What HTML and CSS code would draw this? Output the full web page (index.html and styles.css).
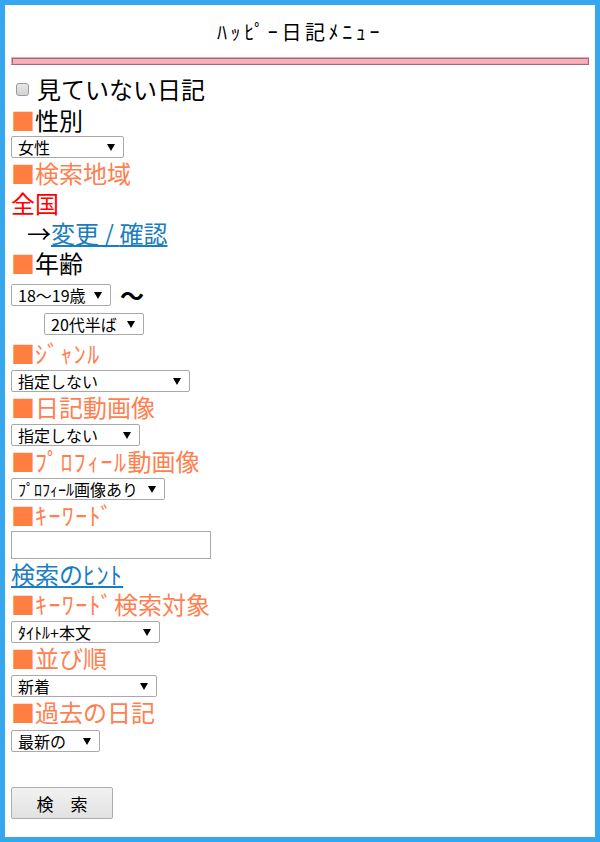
FILE: index.html
```html
<!DOCTYPE html>
<html lang="ja">
<head>
<meta charset="utf-8">
<title>ハッピー日記メニュー</title>
<link rel="stylesheet" href="styles.css">
</head>
<body>
<div class="page">
  <h1 class="title">ﾊｯﾋﾟｰ日記ﾒﾆｭｰ</h1>
  <hr class="rule">
  <form class="form">
    <label class="row check-row"><input type="checkbox" class="check"><span>見ていない日記</span></label>
    <div class="row row-gap1"><span class="mark">■</span>性別</div>
    <div class="sel-row sel-pad1"><span class="sel w113"><select><option>女性</option></select></span></div>
    <div class="row orange"><span class="mark">■</span>検索地域</div>
    <div class="row red">全国</div>
    <div class="row indent">→<a href="#" class="link">変<span class="slash">更/</span>確認</a></div>
    <div class="row"><span class="mark">■</span>年齢</div>
    <div class="sel-row sel-pad6"><span class="sel w100"><select><option>18～19歳</option></select></span><span class="tilde">～</span></div>
    <div class="sel-row sel-pad7 sel-bot3 indent2"><span class="sel w100"><select><option>20代半ば</option></select></span></div>
    <div class="row orange"><span class="mark">■</span><span class="hk">ｼﾞｬﾝﾙ</span></div>
    <div class="sel-row"><span class="sel w179"><select><option>指定しない</option></select></span></div>
    <div class="row orange"><span class="mark">■</span>日記動画像</div>
    <div class="sel-row"><span class="sel w129"><select><option>指定しない</option></select></span></div>
    <div class="row orange"><span class="mark">■</span><span class="hk">ﾌﾟﾛﾌｨｰﾙ</span>動画像</div>
    <div class="sel-row"><span class="sel w154"><select><option>ﾌﾟﾛﾌｨｰﾙ画像あり</option></select></span></div>
    <div class="row orange"><span class="mark">■</span><span class="hk">ｷｰﾜｰﾄﾞ</span></div>
    <div class="input-row"><input type="text" class="text"></div>
    <div class="row"><a href="#" class="link">検索の<span class="hk">ﾋﾝﾄ</span></a></div>
    <div class="row orange"><span class="mark">■</span><span class="hk">ｷｰﾜｰﾄﾞ</span>検索対象</div>
    <div class="sel-row"><span class="sel w149"><select><option>ﾀｲﾄﾙ+本文</option></select></span></div>
    <div class="row orange"><span class="mark">■</span>並び順</div>
    <div class="sel-row"><span class="sel w146"><select><option>新着</option></select></span></div>
    <div class="row orange"><span class="mark">■</span>過去の日記</div>
    <div class="sel-row sel-pad3"><span class="sel w89"><select><option>最新の</option></select></span></div>
    <div class="btn-row"><button type="button" class="btn">検　索</button></div>
  </form>
</div>
</body>
</html>
```
FILE: styles.css
```css
html, body {
  margin: 0;
  padding: 0;
}
body {
  font-family: "Noto Sans CJK JP", "Noto Sans", sans-serif;
  color: #000;
  background: #fff;
}
.page {
  box-sizing: border-box;
  min-height: 842px;
  border: 5px solid #37a7ed;
  padding: 0 6px;
}
.title {
  margin: 0;
  padding-top: 15px;
  font-size: 20px;
  line-height: 24px;
  font-weight: normal;
  text-align: center;
  letter-spacing: 3.6px;
}
.rule {
  margin: 13px 0 9px 0;
  height: 4px;
  border: 2px ridge #f2a3b1;
  background: #f7b0bc;
}
.form {
  display: flex;
  flex-direction: column;
  align-items: flex-start;
}
.row {
  height: 30px;
  font-size: 24px;
  line-height: 30px;
  white-space: nowrap;
}
.row-gap1 { margin-top: 1px; }
.check-row {
  display: flex;
  align-items: center;
}
.check {
  -webkit-appearance: none;
  appearance: none;
  box-sizing: border-box;
  width: 13px;
  height: 13px;
  margin: 0 8px 0 5px;
  border: 1px solid #9a9a9a;
  border-radius: 3px;
  background: linear-gradient(#e8e8e8, #d2d2d2);
}
.mark {
  color: #ff7f43;
}
.hk {
  letter-spacing: 1.4px;
}
.orange { color: #ff7f50; }
.red { color: #ff0000; }
.indent { padding-left: 16px; }
.link {
  color: #1a7dc2;
  text-decoration: underline;
}
.slash {
  letter-spacing: 5.5px;
}
.sel-row {
  display: flex;
  align-items: center;
  padding-top: 2px;
}
.sel-pad1 { padding-top: 1px; }
.sel-pad3 { padding-top: 3px; }
.sel-pad6 { padding-top: 6px; }
.sel-pad7 { padding-top: 7px; }
.sel-bot3 { padding-bottom: 3px; }
.indent2 { padding-left: 33px; }
.sel {
  position: relative;
  display: inline-block;
}
.sel select {
  -webkit-appearance: none;
  appearance: none;
  display: block;
  box-sizing: border-box;
  width: 100%;
  height: 22px;
  margin: 0;
  padding: 0 20px 0 6px;
  border: 1px solid #a9a9a9;
  border-radius: 2px;
  background: #fff;
  color: #000;
  font-family: "Noto Sans CJK JP", "Noto Sans", sans-serif;
  font-size: 16px;
  line-height: 20px;
}
.sel::after {
  content: "";
  position: absolute;
  right: 9px;
  top: 8px;
  border-left: 4px solid transparent;
  border-right: 4px solid transparent;
  border-top: 7px solid #000;
  pointer-events: none;
}
.w89 { width: 89px; }
.w100 { width: 100px; }
.w113 { width: 113px; }
.w129 { width: 129px; }
.w146 { width: 146px; }
.w149 { width: 149px; }
.w154 { width: 154px; }
.w179 { width: 179px; }
.tilde {
  font-size: 24px;
  line-height: 22px;
  margin-left: 9px;
  font-weight: bold;
}
.input-row {
  padding-top: 1px;
}
.text {
  box-sizing: border-box;
  display: block;
  width: 200px;
  height: 28px;
  margin: 0;
  border: 1px solid #a9a9a9;
  background: #fff;
}
.btn-row {
  padding-top: 35px;
}
.btn {
  box-sizing: border-box;
  width: 102px;
  height: 32px;
  margin: 0;
  border: 1px solid #adadad;
  border-radius: 2px;
  background: linear-gradient(#f2f2f2, #e1e1e1);
  font-family: "Noto Sans CJK JP", "Noto Sans", sans-serif;
  font-size: 17px;
  color: #000;
}
```
